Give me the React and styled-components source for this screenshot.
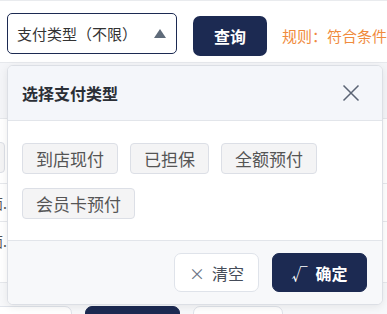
import React from 'react';
import styled, { createGlobalStyle } from 'styled-components';

const navy = '#1c2a52';

const GlobalStyle = createGlobalStyle`
  body {
    margin: 0;
    background: #fff;
    font-family: "Noto Sans CJK SC", "Noto Sans", sans-serif;
  }
`;

const Page = styled.div`
  position: relative;
  width: 387px;
  height: 314px;
  overflow: hidden;
  background: #fff;
`;

const Toolbar = styled.div`
  display: flex;
  align-items: flex-start;
  border-top: 1px solid #e9ebee;
  padding: 12px 0 0 7px;
`;

const Select = styled.div`
  box-sizing: border-box;
  width: 170px;
  height: 41px;
  border: 1px solid ${navy};
  border-radius: 5px;
  padding: 0 10px 0 9px;
  display: flex;
  align-items: center;
  justify-content: space-between;
  font-size: 15px;
  color: #333;
`;

const QueryButton = styled.button`
  margin: 3px 0 0 16px;
  width: 74px;
  height: 40px;
  border: none;
  border-radius: 7px;
  background: ${navy};
  color: #fff;
  font-family: inherit;
  font-size: 16px;
  font-weight: 700;
`;

const RuleText = styled.span`
  margin: 3px 0 0 15px;
  line-height: 40px;
  font-size: 15px;
  color: #f08b3d;
  white-space: nowrap;
`;

/* page content lying behind the dialog */
const BackPanel = styled.div`
  margin-top: 6px;
  border-top: 1px solid #e6e8ec;
`;

const BackHead = styled.div`
  height: 55px;
  background: #f4f5f8;
  border-bottom: 1px solid #e6e8ec;
`;

const BackBody = styled.div`
  padding-top: 23px;
`;

const BackTag = styled.div`
  box-sizing: border-box;
  margin-left: -92px;
  width: 97px;
  height: 31px;
  border: 1px solid #dcdfe6;
  border-radius: 4px;
  background: #f4f4f5;
`;

const BackRow = styled.div`
  height: 37px;
  border-top: 1px solid #e6e8ec;
  display: flex;
  align-items: center;
  margin-top: ${p => p.first ? '10px' : '0'};
`;

const BackCell = styled.div`
  width: 7px;
  display: flex;
  justify-content: flex-end;
  overflow: hidden;
  white-space: nowrap;
  font-size: 14px;
  color: #555;
`;

const BackFoot = styled.div`
  margin-top: 23px;
  border-top: 1px solid #e6e8ec;
  background: #f7f8fa;
  padding-top: 23px;
  display: flex;
  gap: 13px;
  margin-left: -10px;
`;

const Dialog = styled.div`
  position: absolute;
  left: 7px;
  top: 65px;
  width: 376px;
  box-sizing: border-box;
  border: 1px solid #dcdfe5;
  border-radius: 6px;
  background: #fff;
  box-shadow: 0 2px 8px rgba(0, 0, 0, 0.08);
  overflow: hidden;
`;

const Header = styled.div`
  box-sizing: border-box;
  height: 55px;
  padding: 0 22px 0 14px;
  background: #f4f6fa;
  border-bottom: 1px solid #e2e5ea;
  display: flex;
  align-items: center;
  justify-content: space-between;
`;

const Title = styled.span`
  font-size: 16px;
  font-weight: 700;
  color: #2b2f36;
`;

const CloseIcon = styled.svg`
  display: block;
  width: 18px;
  height: 18px;
`;

const Body = styled.div`
  padding: 22px 14px 21px;
  display: flex;
  flex-wrap: wrap;
  gap: 14px 12px;
`;

const Tag = styled.span`
  box-sizing: border-box;
  height: 31px;
  padding: 0 13px;
  border: 1px solid #dcdfe6;
  border-radius: 4px;
  background: #f4f4f5;
  font-size: 17px;
  line-height: 29px;
  color: #555;
`;

const Footer = styled.div`
  border-top: 1px solid #e2e5ea;
  background: #f7f8fa;
  padding: 12px 15px 12px;
  display: flex;
  justify-content: flex-end;
  gap: 13px;
`;

const FootButton = styled.button`
  box-sizing: border-box;
  width: ${p => p.w}px;
  height: 39px;
  border-radius: 7px;
  border: 1px solid ${p => p.primary ? navy : '#dfe3ea'};
  background: ${p => p.primary ? navy : '#fff'};
  color: ${p => p.primary ? '#fff' : '#454c59'};
  font-family: inherit;
  font-size: 16px;
  font-weight: ${p => p.primary ? 700 : 400};
  display: flex;
  align-items: center;
  justify-content: center;
  padding: 0;
`;

const Mark = styled.span`
  margin-right: ${p => p.gap}px;
  color: ${p => p.color};
  font-weight: 400;
`;

const tags = ['到店现付', '已担保', '全额预付', '会员卡预付'];

export default function App() {
  return (
    <Page>
      <GlobalStyle />
      <Toolbar>
        <Select>
          <span>支付类型（不限）</span>
          <svg width="12" height="9" viewBox="0 0 12 9">
            <polygon points="6,0 12,9 0,9" fill="#5f6b7a" />
          </svg>
        </Select>
        <QueryButton>查询</QueryButton>
        <RuleText>规则：符合条件</RuleText>
      </Toolbar>

      <BackPanel>
        <BackHead />
        <BackBody>
          <BackTag />
          <BackRow first><BackCell>页面.</BackCell></BackRow>
          <BackRow><BackCell>页面.</BackCell></BackRow>
        </BackBody>
        <BackFoot>
          <FootButton w={82}><Mark gap={6} color="#6b7585">×</Mark>清空</FootButton>
          <FootButton w={95} primary><Mark gap={6} color="#fff">√</Mark>确定</FootButton>
          <FootButton w={90} />
        </BackFoot>
      </BackPanel>

      <Dialog>
        <Header>
          <Title>选择支付类型</Title>
          <CloseIcon viewBox="0 0 18 18">
            <path d="M1.5 1.5 L16.5 16.5 M16.5 1.5 L1.5 16.5" stroke="#5b6474" strokeWidth="1.5" fill="none" />
          </CloseIcon>
        </Header>
        <Body>
          {tags.map(t => <Tag key={t}>{t}</Tag>)}
        </Body>
        <Footer>
          <FootButton w={85}><Mark gap={7} color="#6b7585">×</Mark>清空</FootButton>
          <FootButton w={95} primary><Mark gap={8} color="#fff">√</Mark>确定</FootButton>
        </Footer>
      </Dialog>
    </Page>
  );
}
